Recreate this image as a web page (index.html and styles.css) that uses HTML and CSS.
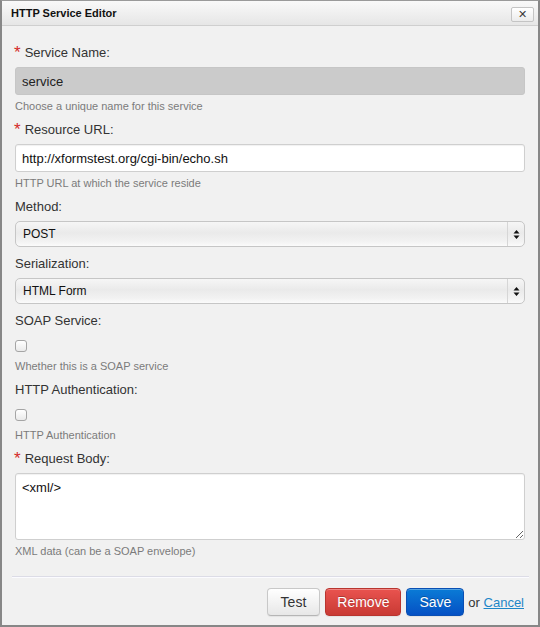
FILE: index.html
```html
<!DOCTYPE html>
<html lang="en">
<head>
    <meta charset="UTF-8">
    <title>HTTP Service Editor</title>
    <link rel="stylesheet" href="styles.css">
</head>
<body>
    <div class="dialog">
        <div class="titlebar">
            <span class="title">HTTP Service Editor</span>
            <button class="close" type="button">&#x2715;</button>
        </div>

        <form class="dialog-body">
            <div class="field">
                <label><span class="req">*</span>Service Name:</label>
                <input class="text disabled" type="text" value="service" disabled>
                <p class="help">Choose a unique name for this service</p>
            </div>

            <div class="field">
                <label><span class="req">*</span>Resource URL:</label>
                <input class="text" type="text" value="http://xformstest.org/cgi-bin/echo.sh">
                <p class="help">HTTP URL at which the service reside</p>
            </div>

            <div class="field field-select">
                <label>Method:</label>
                <div class="select">
                    <select>
                        <option>POST</option>
                        <option>GET</option>
                        <option>PUT</option>
                        <option>DELETE</option>
                    </select>
                    <span class="select-arrows">
                        <svg width="7" height="11" viewBox="0 0 7 11"><path d="M3.5 1 L6.5 4.6 L0.5 4.6 Z M3.5 10 L6.5 6.4 L0.5 6.4 Z" fill="#111"/></svg>
                    </span>
                </div>
            </div>

            <div class="field field-select">
                <label>Serialization:</label>
                <div class="select">
                    <select>
                        <option>HTML Form</option>
                        <option>XML</option>
                        <option>JSON</option>
                    </select>
                    <span class="select-arrows">
                        <svg width="7" height="11" viewBox="0 0 7 11"><path d="M3.5 1 L6.5 4.6 L0.5 4.6 Z M3.5 10 L6.5 6.4 L0.5 6.4 Z" fill="#111"/></svg>
                    </span>
                </div>
            </div>

            <div class="field">
                <label>SOAP Service:</label>
                <input class="check" type="checkbox">
                <p class="help after-check">Whether this is a SOAP service</p>
            </div>

            <div class="field">
                <label>HTTP Authentication:</label>
                <input class="check" type="checkbox">
                <p class="help after-check">HTTP Authentication</p>
            </div>

            <div class="field">
                <label><span class="req">*</span>Request Body:</label>
                <textarea class="text area">&lt;xml/&gt;</textarea>
                <p class="help">XML data (can be a SOAP envelope)</p>
            </div>
        </form>

        <div class="footer">
            <button class="btn btn-test" type="button">Test</button>
            <button class="btn btn-danger" type="button">Remove</button>
            <button class="btn btn-primary" type="button">Save</button>
            <span class="or">or <a href="#cancel">Cancel</a></span>
        </div>
    </div>
</body>
</html>
```

FILE: styles.css
```css
body {
    margin: 0;
    font-family: "Liberation Sans", Arial, sans-serif;
    color: #333;
}
.dialog {
    width: 540px;
    height: 627px;
    box-sizing: border-box;
    border: 2px solid #878787;
    border-top: 1px solid #9a9a9a;
    background: #f1f1f1;
    display: flex;
    flex-direction: column;
}
.titlebar {
    height: 24px;
    display: flex;
    align-items: center;
    justify-content: space-between;
    padding: 0 4px 0 9px;
    background: linear-gradient(#f9f9f9, #e6e6e6);
    border-bottom: 1px solid #cfcfcf;
}
.title {
    font-size: 11px;
    font-weight: bold;
    color: #111;
    margin-top: -1px;
}
.close {
    width: 23px;
    height: 15px;
    padding: 0;
    margin-top: 3px;
    border: 1px solid #c4c4c4;
    border-radius: 2px;
    background: linear-gradient(#ffffff, #ececec);
    color: #3a3a3a;
    font-size: 11px;
    font-weight: bold;
    line-height: 13px;
    font-family: "DejaVu Sans", sans-serif;
}
.dialog-body {
    padding: 17px 13px 0;
    margin: 0;
}
.field {
    margin-bottom: 6px;
}
.field-select {
    margin-bottom: 7px;
}
.field label {
    display: block;
    padding-top: 2px;
    font-size: 13px;
    line-height: 16px;
    color: #333;
}
.req {
    color: #d42a2a;
    font-size: 17px;
    line-height: 10px;
    margin-right: 4px;
    margin-left: -1px;
    vertical-align: -1px;
}
.text {
    display: block;
    width: 100%;
    box-sizing: border-box;
    height: 28px;
    margin: 6px 0 0;
    padding: 0 6px;
    border: 1px solid #cfcfcf;
    border-radius: 3px;
    background: #fff;
    font-family: "Liberation Sans", Arial, sans-serif;
    font-size: 13px;
    color: #111;
    box-shadow: inset 0 1px 1px rgba(0, 0, 0, 0.06);
}
.text.disabled {
    background: #cbcbcb;
    border-color: #c6c6c6;
    color: #222;
    box-shadow: none;
}
.area {
    height: 67px;
    padding: 5px 6px;
    line-height: 18px;
    resize: vertical;
}
.help {
    margin: 4px 0 1px;
    font-size: 11px;
    line-height: 15px;
    color: #7b7b7b;
}
.help.after-check {
    margin-top: 7px;
}
.select {
    position: relative;
    margin-top: 6px;
}
.select select {
    display: block;
    width: 100%;
    height: 26px;
    box-sizing: border-box;
    appearance: none;
    -webkit-appearance: none;
    padding: 0 24px 0 7px;
    border: 1px solid #c6c6c6;
    border-radius: 5px;
    background: linear-gradient(#f6f6f6, #eaeaea 45%, #f2f2f2 80%, #fbfbfb);
    font-family: "Liberation Sans", Arial, sans-serif;
    font-size: 12px;
    color: #111;
}
.select-arrows {
    position: absolute;
    top: 1px;
    right: 1px;
    bottom: 1px;
    width: 16px;
    border-left: 1px solid #d6d6d6;
    display: flex;
    align-items: center;
    justify-content: center;
    pointer-events: none;
}
.check {
    display: block;
    appearance: none;
    -webkit-appearance: none;
    width: 12px;
    height: 12px;
    margin: 11px 0 0;
    border: 1px solid #a5a5a5;
    border-radius: 3px;
    background: linear-gradient(#ffffff, #eaeaea);
    box-sizing: border-box;
}
.footer {
    margin: auto 9px 0 10px;
    border-top: 1px solid #dcdce6;
    box-shadow: inset 0 1px 0 #fbfbff;
    padding: 11px 5px 9px 0;
    display: flex;
    justify-content: flex-end;
    align-items: center;
    gap: 5px;
}
.btn {
    height: 28px;
    padding: 0 12px;
    border: 1px solid #c8c8c8;
    border-bottom-color: #b5b5b5;
    border-radius: 4px;
    background: linear-gradient(#ffffff, #e7e7e7);
    font-family: "Liberation Sans", Arial, sans-serif;
    font-size: 14px;
    color: #333;
    box-shadow: inset 0 1px 0 rgba(255, 255, 255, 0.3), 0 1px 1px rgba(0, 0, 0, 0.06);
}
.btn-test {
    padding: 0 13px;
}
.btn-danger {
    padding: 0 11px;
    color: #fff;
    border-color: #b8352f;
    background: linear-gradient(#e9534f, #c93a34);
    text-shadow: 0 -1px 0 rgba(0, 0, 0, 0.25);
}
.btn-primary {
    color: #fff;
    border-color: #0a4fb3;
    background: linear-gradient(#0a7bd6, #0551c4);
    text-shadow: 0 -1px 0 rgba(0, 0, 0, 0.25);
}
.or {
    font-size: 13px;
    color: #333;
    margin-left: -1px;
}
.or a {
    color: #1e86c8;
}
```
